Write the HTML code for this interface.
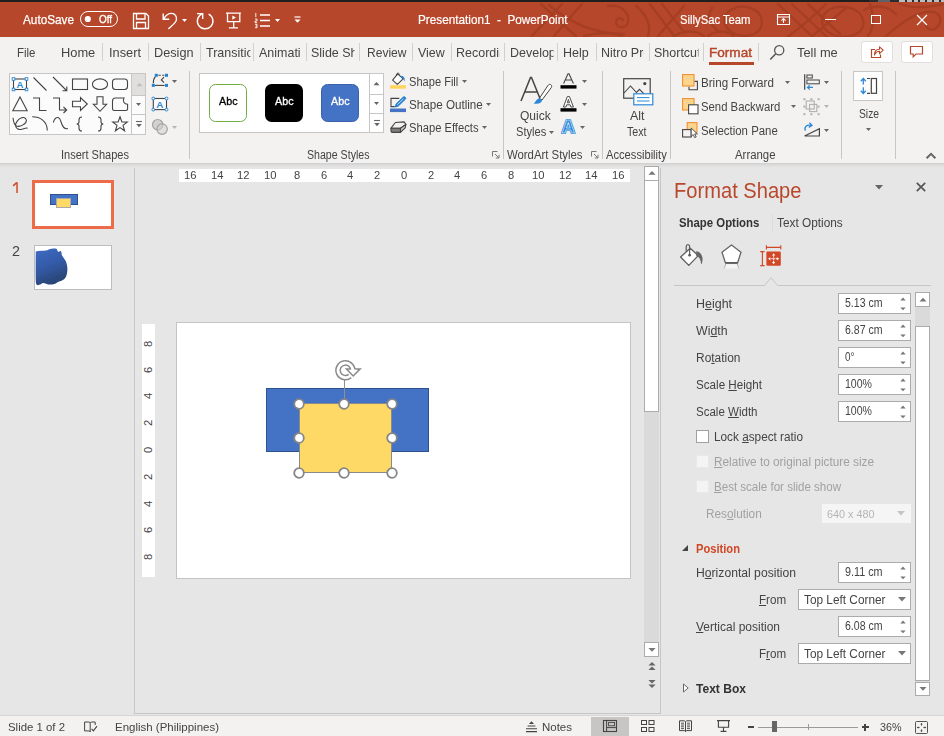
<!DOCTYPE html>
<html><head><meta charset="utf-8"><title>PowerPoint</title>
<style>
html,body{margin:0;padding:0;}
body{width:944px;height:736px;position:relative;overflow:hidden;background:#E6E6E6;font-family:"Liberation Sans",sans-serif;}
.a{position:absolute;display:block;}
.t{position:absolute;display:block;white-space:nowrap;transform-origin:0 50%;}
.t u{text-decoration:underline;text-underline-offset:1px;text-decoration-thickness:1px;}
svg{overflow:visible;}
</style></head><body>
<div class="a" style="left:0px;top:0px;width:944px;height:2px;background:#1f1f1f;"></div>
<div class="a" style="left:0px;top:2px;width:944px;height:35px;background:#B7472A;"></div>
<div class="a" style="left:0px;top:37px;width:944px;height:126px;background:#F3F2F1;"></div>
<div class="a" style="left:0;top:163px;width:944px;height:5px;background:linear-gradient(#cfcfcf,#dedede 50%,#e6e6e6)"></div>
<div class="a" style="left:0px;top:168px;width:944px;height:547px;background:#E6E6E6;"></div>
<div class="a" style="left:0px;top:715px;width:944px;height:1px;background:#d6d6d6;"></div>
<div class="a" style="left:0px;top:716px;width:944px;height:20px;background:#F3F2F1;"></div>
<svg class="a" style="left:524px;top:2px;overflow:hidden;" width="420" height="35" viewBox="0 0 420 35"><g fill="none" stroke="#9c3a21" stroke-width="2.4" opacity="0.62" stroke-linecap="round">
<path d="M8 34 L38 2"/><path d="M30 34 L58 2"/><path d="M17 2 C30 14 40 24 52 34"/>
<path d="M25 3 C45 20 70 32 100 32"/>
<path d="M84 4 C96 2 106 10 104 20 C102 28 92 26 92 20 C92 16 97 15 99 18"/>
<path d="M60 34 C75 30 88 30 98 34"/>
<path d="M112 4 C122 12 128 24 124 34"/><path d="M126 2 L150 34"/><path d="M138 2 L160 30"/><path d="M160 4 L134 34"/>
<path d="M150 34 C160 28 172 28 180 34"/>
<path d="M188 6 C182 14 186 24 196 30"/>
<path d="M200 20 C200 8 214 2 226 6 C240 10 242 26 230 32 C218 37 204 32 200 20"/>
<path d="M184 34 C196 26 204 30 210 34"/>
<path d="M254 2 L290 36"/><path d="M268 2 L304 36"/><path d="M284 2 L316 32"/><path d="M302 2 C290 14 276 26 262 36"/><path d="M322 6 C310 16 298 26 286 36"/>
<path d="M298 20 C298 8 312 2 326 6 C342 10 344 28 330 33 C316 38 300 32 298 20"/>
<path d="M340 8 C350 2 364 4 372 12"/>
<path d="M346 2 C350 14 350 26 344 34"/>
<path d="M362 34 C372 26 384 14 402 10 C414 8 420 16 414 24 C410 30 402 28 402 22"/>
<path d="M376 2 C392 8 408 4 420 2"/>
</g></svg>
<div class="a" style="left:869px;top:0px;width:75px;height:2px;background:#2a2c2f;"></div>
<div class="a" style="left:878px;top:0px;width:12px;height:2px;background:#5c6268;"></div>
<div class="a" style="left:899px;top:0px;width:6px;height:1.6px;background:#bdbdbd;"></div>
<div class="a" style="left:907px;top:0px;width:5px;height:1.6px;background:#bdbdbd;"></div>
<div class="a" style="left:914px;top:0px;width:4px;height:1.6px;background:#bdbdbd;"></div>
<div class="a" style="left:920px;top:0px;width:5px;height:1.6px;background:#bdbdbd;"></div>
<div class="a" style="left:927px;top:0px;width:5px;height:1.6px;background:#bdbdbd;"></div>
<div class="a" style="left:934px;top:0px;width:5px;height:1.6px;background:#bdbdbd;"></div>
<div class="a" style="left:941px;top:0px;width:3px;height:1.6px;background:#bdbdbd;"></div>
<span class="t" style="left:23px;top:11.50px;font-size:13px;line-height:16px;color:#fff;font-weight:400;transform:scaleX(0.9047);-webkit-text-stroke:0.25px #fff;">AutoSave</span>
<div class="a" style="left:80px;top:11px;width:38px;height:16px;border:1px solid #fff;border-radius:8px;box-sizing:border-box;"></div>
<svg class="a" style="left:83px;top:14px;" width="10" height="10" viewBox="0 0 10 10"><circle cx="4.8" cy="5" r="3.1" fill="#fff"/></svg>
<span class="t" style="left:99px;top:11.30px;font-size:11px;line-height:16px;color:#fff;font-weight:400;transform:scaleX(0.8984);-webkit-text-stroke:0.35px #fff;">Off</span>
<svg class="a" style="left:132px;top:12px;" width="18" height="18" viewBox="0 0 18 18"><path d="M1.5 1.5 h12.5 l2.5 2.5 v12.5 h-15 z M4.5 1.5 v5.5 h8.5 v-5.5 M4.5 16.5 v-6 h9 v6" fill="none" stroke="#fff" stroke-width="1.3"/></svg>
<svg class="a" style="left:162px;top:11px;" width="18" height="19" viewBox="0 0 18 19"><path d="M1.2 2.6 V8.3 H7.3 M1.6 8 C4 4 7 2.3 9.6 2.4 C13 2.5 15 5.5 14.4 9 C14 11.5 12 13 6.4 17.9" fill="none" stroke="#fff" stroke-width="1.4"/></svg>
<svg class="a" style="left:181.0px;top:17.5px;" width="7" height="5.0" viewBox="0 0 7 5.0"><path d="M1 1 h5 l-2.5 3.0 z" fill="#fff"/></svg>
<svg class="a" style="left:195px;top:10px;" width="20" height="20" viewBox="0 0 20 20"><path d="M2 3.6 H7.7 V8.9 M13.64 4.02 A7.8 7.8 0 1 1 7.7 3.6" fill="none" stroke="#fff" stroke-width="1.4"/></svg>
<svg class="a" style="left:225px;top:11px;" width="18" height="19" viewBox="0 0 18 19"><path d="M1 2.2 H15.9 M2.5 2.2 V10.7 H14.8 V2.2 M8.7 10.7 V16.4 M3.9 16.8 H13" fill="none" stroke="#fff" stroke-width="1.3"/><path d="M7.3 4.5 L10.9 6.6 L7.3 8.8z" fill="#fff"/></svg>
<svg class="a" style="left:254px;top:12px;" width="17" height="17" viewBox="0 0 17 17"><path d="M6 3 h10 M6 8.5 h10 M6 14 h10" stroke="#fff" stroke-width="1.3"/><path d="M1.8 1 v4 M1 7 h2 v2 h-2 v1.6 h2.2 M1 12.3 h2 v3.4 h-2 M1.6 14 h1.4" fill="none" stroke="#fff" stroke-width="0.9"/></svg>
<svg class="a" style="left:274.0px;top:17.5px;" width="7" height="5.0" viewBox="0 0 7 5.0"><path d="M1 1 h5 l-2.5 3.0 z" fill="#fff"/></svg>
<svg class="a" style="left:292px;top:14px;" width="11" height="11" viewBox="0 0 11 11"><path d="M2.5 3 h6" stroke="#fff" stroke-width="1.2"/><path d="M2.5 5.5 h6 l-3 3.2z" fill="#fff"/></svg>
<span class="t" style="left:417.5px;top:11.50px;font-size:13px;line-height:16px;color:#fff;font-weight:400;transform:scaleX(0.9034);white-space:pre;-webkit-text-stroke:0.2px #fff;">Presentation1  -  PowerPoint</span>
<span class="t" style="left:680px;top:11.50px;font-size:13px;line-height:16px;color:#fff;font-weight:400;transform:scaleX(0.8661);-webkit-text-stroke:0.2px #fff;">SillySac Team</span>
<svg class="a" style="left:776px;top:13px;" width="15" height="13" viewBox="0 0 15 13"><path d="M1.5 1.5 h12 v10 h-12 z M1.5 4 h12" fill="none" stroke="#fff" stroke-width="1.1"/><path d="M7.5 10 v-4.2 M5.5 7.6 l2-2 2 2" fill="none" stroke="#fff" stroke-width="1.1"/></svg>
<div class="a" style="left:825px;top:19px;width:10.5px;height:1.2px;background:#fff;"></div>
<div class="a" style="left:871px;top:14.5px;width:9.5px;height:9.5px;border:1.2px solid #fff;box-sizing:border-box;"></div>
<svg class="a" style="left:916px;top:13.5px;" width="12" height="12" viewBox="0 0 12 12"><path d="M1 1 L11 11 M11 1 L1 11" stroke="#fff" stroke-width="1.2"/></svg>
<span class="t" style="left:17px;top:44.90px;font-size:13.5px;line-height:16px;color:#444;font-weight:400;transform:scaleX(0.8505);">File</span>
<span class="t" style="left:61.25px;top:44.90px;font-size:13.5px;line-height:16px;color:#444;font-weight:400;transform:scaleX(0.9511);">Home</span>
<span class="t" style="left:109px;top:44.90px;font-size:13.5px;line-height:16px;color:#444;font-weight:400;transform:scaleX(0.9478);">Insert</span>
<span class="t" style="left:154.25px;top:44.90px;font-size:13.5px;line-height:16px;color:#444;font-weight:400;transform:scaleX(0.9400);">Design</span>
<span class="t" style="left:205.5px;top:44.90px;font-size:13.5px;line-height:16px;color:#444;font-weight:400;width:48.32px;overflow:hidden;transform:scaleX(0.9250);">Transitions</span>
<span class="t" style="left:258.5px;top:44.90px;font-size:13.5px;line-height:16px;color:#444;font-weight:400;width:45.41px;overflow:hidden;transform:scaleX(0.9250);">Animations</span>
<span class="t" style="left:311px;top:44.90px;font-size:13.5px;line-height:16px;color:#444;font-weight:400;width:46.81px;overflow:hidden;transform:scaleX(0.9250);">Slide Show</span>
<span class="t" style="left:366.5px;top:44.90px;font-size:13.5px;line-height:16px;color:#444;font-weight:400;transform:scaleX(0.8924);">Review</span>
<span class="t" style="left:418px;top:44.90px;font-size:13.5px;line-height:16px;color:#444;font-weight:400;transform:scaleX(0.9219);">View</span>
<span class="t" style="left:456px;top:44.90px;font-size:13.5px;line-height:16px;color:#444;font-weight:400;width:46.70px;overflow:hidden;transform:scaleX(0.9250);">Recording</span>
<span class="t" style="left:509.5px;top:44.90px;font-size:13.5px;line-height:16px;color:#444;font-weight:400;width:46.59px;overflow:hidden;transform:scaleX(0.9250);">Developer</span>
<span class="t" style="left:563.25px;top:44.90px;font-size:13.5px;line-height:16px;color:#444;font-weight:400;transform:scaleX(0.9274);">Help</span>
<span class="t" style="left:601.25px;top:44.90px;font-size:13.5px;line-height:16px;color:#444;font-weight:400;width:46.22px;overflow:hidden;transform:scaleX(0.9250);">Nitro Pro</span>
<span class="t" style="left:654px;top:44.90px;font-size:13.5px;line-height:16px;color:#444;font-weight:400;width:47.57px;overflow:hidden;transform:scaleX(0.9250);">Shortcuts</span>
<div class="a" style="left:102.0px;top:43px;width:1px;height:17.5px;background:#d2d0ce;"></div>
<div class="a" style="left:148.0px;top:43px;width:1px;height:17.5px;background:#d2d0ce;"></div>
<div class="a" style="left:199.75px;top:43px;width:1px;height:17.5px;background:#d2d0ce;"></div>
<div class="a" style="left:253.0px;top:43px;width:1px;height:17.5px;background:#d2d0ce;"></div>
<div class="a" style="left:306.0px;top:43px;width:1px;height:17.5px;background:#d2d0ce;"></div>
<div class="a" style="left:359.0px;top:43px;width:1px;height:17.5px;background:#d2d0ce;"></div>
<div class="a" style="left:412.0px;top:43px;width:1px;height:17.5px;background:#d2d0ce;"></div>
<div class="a" style="left:451.0px;top:43px;width:1px;height:17.5px;background:#d2d0ce;"></div>
<div class="a" style="left:504.0px;top:43px;width:1px;height:17.5px;background:#d2d0ce;"></div>
<div class="a" style="left:557.25px;top:43px;width:1px;height:17.5px;background:#d2d0ce;"></div>
<div class="a" style="left:595.75px;top:43px;width:1px;height:17.5px;background:#d2d0ce;"></div>
<div class="a" style="left:649.0px;top:43px;width:1px;height:17.5px;background:#d2d0ce;"></div>
<div class="a" style="left:703.0px;top:43px;width:1px;height:17.5px;background:#d2d0ce;"></div>
<div class="a" style="left:758.0px;top:43px;width:1px;height:17.5px;background:#d2d0ce;"></div>
<span class="t" style="left:709px;top:44.90px;font-size:13.5px;line-height:16px;color:#B7472A;font-weight:400;transform:scaleX(1.0057);-webkit-text-stroke:0.45px #B7472A;">Format</span>
<div class="a" style="left:709px;top:62px;width:45px;height:3px;background:#B7472A;"></div>
<svg class="a" style="left:769px;top:44px;" width="17" height="17" viewBox="0 0 17 17"><circle cx="10.2" cy="6.3" r="4.6" fill="none" stroke="#555" stroke-width="1.3"/><path d="M7 9.6 L1.2 15.6" stroke="#555" stroke-width="1.5"/></svg>
<span class="t" style="left:796.75px;top:44.90px;font-size:13.5px;line-height:16px;color:#444;font-weight:400;transform:scaleX(0.9530);">Tell me</span>
<div class="a" style="left:861px;top:41px;width:31.5px;height:22px;background:#fff;border:1px solid #e1dfdd;border-radius:3px;box-sizing:border-box;"></div>
<div class="a" style="left:901px;top:41px;width:31.5px;height:22px;background:#fff;border:1px solid #e1dfdd;border-radius:3px;box-sizing:border-box;"></div>
<svg class="a" style="left:869px;top:44px;" width="16" height="16" viewBox="0 0 16 16"><path d="M6 5.5 h-3.5 v8 h9 v-3" fill="none" stroke="#B7472A" stroke-width="1.2"/><path d="M5.5 11 C5.5 7 8 5.2 10.5 5.2 V2.8 L14.2 6.2 L10.5 9.6 V7.3 C8.5 7.3 6.8 8.2 5.5 11z" fill="none" stroke="#B7472A" stroke-width="1.1" stroke-linejoin="round"/></svg>
<svg class="a" style="left:909px;top:45px;" width="16" height="14" viewBox="0 0 16 14"><path d="M1.5 1.5 h12 v7.5 h-6.5 l-2.8 2.8 v-2.8 h-2.7z" fill="none" stroke="#B7472A" stroke-width="1.2"/></svg>
<div class="a" style="left:9px;top:73px;width:137px;height:61.5px;background:#fbfbfb;border:1px solid #c8c6c4;box-sizing:border-box;"></div>
<div class="a" style="left:131px;top:73px;width:1px;height:61.5px;background:#c8c6c4;"></div>
<div class="a" style="left:132px;top:74px;width:13px;height:20.5px;background:#e1dfdd;"></div>
<div class="a" style="left:131px;top:94.5px;width:14.5px;height:1px;background:#c8c6c4;"></div>
<div class="a" style="left:131px;top:113.5px;width:14.5px;height:1px;background:#c8c6c4;"></div>
<svg class="a" style="left:135.5px;top:81.5px;" width="7" height="5" viewBox="0 0 7 5"><path d="M0.5 4.2 L3.5 1 L6.5 4.2z" fill="#bdbdbd"/></svg>
<svg class="a" style="left:135.2px;top:101.8px;" width="7" height="5.0" viewBox="0 0 7 5.0"><path d="M1 1 h5 l-2.5 3.0 z" fill="#666"/></svg>
<svg class="a" style="left:135px;top:119.5px;" width="8" height="9" viewBox="0 0 8 9"><path d="M1 1.5 h6" stroke="#666" stroke-width="1.1"/><path d="M1.2 4 h5.6 l-2.8 3.2z" fill="#666"/></svg>
<svg class="a" style="left:11.0px;top:74.75px;" width="18" height="18" viewBox="0 0 18 18"><rect x="2.5" y="4" width="13" height="10.5" fill="#fff" stroke="#444" stroke-width="1.1"/><text x="9" y="13" font-family="Liberation Sans" font-weight="700" font-size="9.6" fill="#2B88D8" text-anchor="middle">A</text><rect x="1.2" y="2.7" width="2.6" height="2.6" fill="#fff" stroke="#2B88D8" stroke-width="0.9"/><rect x="1.2" y="13.2" width="2.6" height="2.6" fill="#fff" stroke="#2B88D8" stroke-width="0.9"/><rect x="14.2" y="2.7" width="2.6" height="2.6" fill="#fff" stroke="#2B88D8" stroke-width="0.9"/><rect x="14.2" y="13.2" width="2.6" height="2.6" fill="#fff" stroke="#2B88D8" stroke-width="0.9"/></svg>
<svg class="a" style="left:31.0px;top:74.75px;" width="18" height="18" viewBox="0 0 18 18"><path d="M2.5 2.5 L15.5 15.5" fill="none" stroke="#444" stroke-width="1.1"/></svg>
<svg class="a" style="left:51.0px;top:74.75px;" width="18" height="18" viewBox="0 0 18 18"><path d="M2 2 L15.5 15.5 M11.5 15.8 h4.3 v-4.3" fill="none" stroke="#444" stroke-width="1.1"/></svg>
<svg class="a" style="left:71.0px;top:74.75px;" width="18" height="18" viewBox="0 0 18 18"><rect x="1.5" y="4" width="15" height="10.5" fill="none" stroke="#444" stroke-width="1.1"/></svg>
<svg class="a" style="left:91.0px;top:74.75px;" width="18" height="18" viewBox="0 0 18 18"><ellipse cx="9" cy="9.2" rx="7.6" ry="5.3" fill="none" stroke="#444" stroke-width="1.1"/></svg>
<svg class="a" style="left:111.0px;top:74.75px;" width="18" height="18" viewBox="0 0 18 18"><rect x="1.5" y="4" width="15" height="10.5" rx="3" fill="none" stroke="#444" stroke-width="1.1"/></svg>
<svg class="a" style="left:11.0px;top:94.75px;" width="18" height="18" viewBox="0 0 18 18"><path d="M9 2 L16.2 15.8 H1.8z" fill="none" stroke="#444" stroke-width="1.1"/></svg>
<svg class="a" style="left:31.0px;top:94.75px;" width="18" height="18" viewBox="0 0 18 18"><path d="M2 3 h6.5 v12.5 h7" fill="none" stroke="#444" stroke-width="1.1"/></svg>
<svg class="a" style="left:51.0px;top:94.75px;" width="18" height="18" viewBox="0 0 18 18"><path d="M2 3 h6.5 v12 h7 M12.5 12 l3.2 3 -3.2 3" fill="none" stroke="#444" stroke-width="1.1"/></svg>
<svg class="a" style="left:71.0px;top:94.75px;" width="18" height="18" viewBox="0 0 18 18"><path d="M1.5 6.2 h8 v-3.6 l6.8 6.4 -6.8 6.4 v-3.6 h-8z" fill="none" stroke="#444" stroke-width="1.1"/></svg>
<svg class="a" style="left:91.0px;top:94.75px;" width="18" height="18" viewBox="0 0 18 18"><path d="M6 1.8 h6 v7.5 h3.6 l-6.6 7 -6.6-7 h3.6z" fill="none" stroke="#444" stroke-width="1.1"/></svg>
<svg class="a" style="left:111.0px;top:94.75px;" width="18" height="18" viewBox="0 0 18 18"><path d="M4.5 3 h8.5 c-1.6 3 0 6.2 3.6 6.2 v4.6 c0 1-0.7 1.7-1.7 1.7 h-11.7 c-1 0-1.7-0.7-1.7-1.7 v-7.8 c0-1.8 1.2-3 3-3z" fill="none" stroke="#444" stroke-width="1.1"/></svg>
<svg class="a" style="left:11.0px;top:115.25px;" width="18" height="18" viewBox="0 0 18 18"><path d="M2 2.7 C2.5 7 3.5 10 5.5 11 C9 12.5 16 8.5 15.3 5 C14.8 2.5 12.5 2 10.5 2.8 C7 4.2 4 8 4.6 11 C5.2 14 8 15 11 14.2 C13 13.7 15 12.5 16.7 13.2" fill="none" stroke="#444" stroke-width="1.1"/></svg>
<svg class="a" style="left:31.0px;top:115.25px;" width="18" height="18" viewBox="0 0 18 18"><path d="M1.2 1.8 C9 1.8 16.3 6 16.3 15.5" fill="none" stroke="#444" stroke-width="1.1"/></svg>
<svg class="a" style="left:51.0px;top:115.25px;" width="18" height="18" viewBox="0 0 18 18"><path d="M2.3 7.5 C3.5 3.5 5.5 2.3 7 2.5 C9 2.8 9.8 6 10.6 8.5 C11.6 11.5 13.5 14.5 17 13.5" fill="none" stroke="#444" stroke-width="1.1"/></svg>
<svg class="a" style="left:71.0px;top:115.25px;" width="18" height="18" viewBox="0 0 18 18"><path d="M11 2 c-2.5 0-3 1-3 2.8 v2 c0 1.5-0.8 2.2-2.3 2.2 c1.5 0 2.3 0.7 2.3 2.2 v2 c0 1.8 0.5 2.8 3 2.8" fill="none" stroke="#444" stroke-width="1.1" stroke-width="1.3"/></svg>
<svg class="a" style="left:91.0px;top:115.25px;" width="18" height="18" viewBox="0 0 18 18"><path d="M7 2 c2.5 0 3 1 3 2.8 v2 c0 1.5 0.8 2.2 2.3 2.2 c-1.5 0-2.3 0.7-2.3 2.2 v2 c0 1.8-0.5 2.8-3 2.8" fill="none" stroke="#444" stroke-width="1.1" stroke-width="1.3"/></svg>
<svg class="a" style="left:111.0px;top:115.25px;" width="18" height="18" viewBox="0 0 18 18"><path d="M9 1.8 L10.9 7 H16.3 L12 10.4 L13.6 15.8 L9 12.6 L4.4 15.8 L6 10.4 L1.7 7 H7.1z" fill="none" stroke="#444" stroke-width="1.1"/></svg>
<svg class="a" style="left:151px;top:72px;" width="18" height="18" viewBox="0 0 18 18"><path d="M7.4 3.3 h6" fill="none" stroke="#444" stroke-width="1.1" stroke-dasharray="2.4 1.4"/><path d="M4 13.4 h9.6" fill="none" stroke="#444" stroke-width="1.1"/><path d="M2.4 11.4 c-0.3-2.8 0.4-5 2-6.8" fill="none" stroke="#444" stroke-width="1.1"/><path d="M13 5.2 L10.4 7.9 L13 10.6" fill="none" stroke="#444" stroke-width="1.2"/><rect x="3.8" y="1.7999999999999998" width="3" height="3" fill="#1e83d6"/><rect x="14.0" y="1.7999999999999998" width="3" height="3" fill="#1e83d6"/><rect x="0.7999999999999998" y="11.9" width="3" height="3" fill="#1e83d6"/><rect x="14.0" y="11.9" width="3" height="3" fill="#1e83d6"/></svg>
<svg class="a" style="left:171.0px;top:78.5px;" width="7" height="5.0" viewBox="0 0 7 5.0"><path d="M1 1 h5 l-2.5 3.0 z" fill="#666"/></svg>
<svg class="a" style="left:151px;top:95px;" width="18" height="18" viewBox="0 0 18 18"><rect x="2.3" y="3.5" width="13.2" height="11.1" fill="#fbfbfb" stroke="#444" stroke-width="1.1"/><text x="8.9" y="12.7" font-family="Liberation Sans" font-weight="700" font-size="9.8" fill="#2B88D8" text-anchor="middle">A</text><circle cx="2.3" cy="3.5" r="1.4" fill="#fff" stroke="#1e83d6" stroke-width="1"/><circle cx="2.3" cy="14.6" r="1.4" fill="#fff" stroke="#1e83d6" stroke-width="1"/><circle cx="15.5" cy="3.5" r="1.4" fill="#fff" stroke="#1e83d6" stroke-width="1"/><circle cx="15.5" cy="14.6" r="1.4" fill="#fff" stroke="#1e83d6" stroke-width="1"/></svg>
<svg class="a" style="left:151px;top:118px;" width="18" height="18" viewBox="0 0 18 18"><circle cx="6.7" cy="6.7" r="5.2" fill="#d2d2d2" stroke="#a3a3a3" stroke-width="1.2"/><circle cx="11.1" cy="11.1" r="5.2" fill="#d2d2d2" fill-opacity="0.55" stroke="#a3a3a3" stroke-width="1.2"/></svg>
<svg class="a" style="left:171.0px;top:125.3px;" width="7" height="5.0" viewBox="0 0 7 5.0"><path d="M1 1 h5 l-2.5 3.0 z" fill="#b5b5b5"/></svg>
<span class="t" style="left:60.5px;top:147.00px;font-size:12px;line-height:16px;color:#444;font-weight:400;transform:scaleX(0.9184);">Insert Shapes</span>
<div class="a" style="left:189px;top:71px;width:1px;height:88px;background:#c8c6c4;"></div>
<div class="a" style="left:199px;top:73px;width:185px;height:60px;background:#fff;border:1px solid #c8c6c4;box-sizing:border-box;"></div>
<div class="a" style="left:369px;top:73px;width:1px;height:60px;background:#c8c6c4;"></div>
<div class="a" style="left:369px;top:93.7px;width:14.5px;height:1px;background:#c8c6c4;"></div>
<div class="a" style="left:369px;top:113px;width:14.5px;height:1px;background:#c8c6c4;"></div>
<svg class="a" style="left:373.2px;top:101.3px;" width="7" height="5.0" viewBox="0 0 7 5.0"><path d="M1 1 h5 l-2.5 3.0 z" fill="#666"/></svg>
<svg class="a" style="left:373.2px;top:81px;" width="7" height="5" viewBox="0 0 7 5"><path d="M0.5 4.2 L3.5 1 L6.5 4.2z" fill="#666"/></svg>
<svg class="a" style="left:373px;top:119px;" width="8" height="9" viewBox="0 0 8 9"><path d="M1 1.5 h6" stroke="#666" stroke-width="1.1"/><path d="M1.2 4 h5.6 l-2.8 3.2z" fill="#666"/></svg>
<div class="a" style="left:209px;top:83.8px;width:38px;height:38px;background:#fff;border:1.5px solid #70AD47;border-radius:6.5px;box-sizing:border-box;"></div>
<div class="a" style="left:265px;top:83.8px;width:38px;height:38px;background:#000;border-radius:6.5px;"></div>
<div class="a" style="left:321px;top:83.8px;width:38px;height:38px;background:#4472C4;border:1px solid #3a62ab;border-radius:6.5px;box-sizing:border-box;"></div>
<span class="t" style="left:219px;top:93.20px;font-size:11px;line-height:16px;color:#000;font-weight:400;transform:scaleX(0.9760);-webkit-text-stroke:0.3px #000;">Abc</span>
<span class="t" style="left:275px;top:93.20px;font-size:11px;line-height:16px;color:#fff;font-weight:400;transform:scaleX(0.9760);-webkit-text-stroke:0.3px #fff;">Abc</span>
<span class="t" style="left:331px;top:93.20px;font-size:11px;line-height:16px;color:#fff;font-weight:400;transform:scaleX(0.9760);-webkit-text-stroke:0.3px #fff;">Abc</span>
<svg class="a" style="left:390px;top:71px;" width="18" height="18" viewBox="0 0 18 18"><path d="M2.6 9.1 L7.7 2.9 L13.1 7.8 L7.3 13.3z" fill="#fff" stroke="#444" stroke-width="1.1" stroke-linejoin="round"/><path d="M6.6 5 C5.8 2.2 8.6 0.8 9.6 3.6" fill="none" stroke="#444" stroke-width="1"/><path d="M11.4 4.4 c2.8 0.8 4 3.4 3 6.4 c-0.4-2.2-1.4-3.4-3.2-4.2z" fill="#1e83d6"/><rect x="0" y="14.2" width="16" height="3.5" fill="#FFD55F"/></svg>
<svg class="a" style="left:390px;top:94.5px;" width="18" height="18" viewBox="0 0 18 18"><path d="M9.3 3.4 H1 V11.6 H4.8" fill="none" stroke="#444" stroke-width="1.1"/><path d="M5.2 12 l0.9-3 7.2-7 c1-1 3.2 1 2.2 2.1 l-7.2 7z" fill="#2B88D8" stroke="#1e74c4" stroke-width="0.9" stroke-linejoin="round"/><path d="M7.4 9.6 L13.4 3.8" stroke="#bfe0fa" stroke-width="0.9"/><rect x="0" y="13.5" width="16" height="3.6" fill="#4472C4"/></svg>
<svg class="a" style="left:390px;top:118.5px;" width="18" height="18" viewBox="0 0 18 18"><path d="M1 9.2 L5.4 3.5 L14.1 2.9 L15.9 5.4 L10.5 9.2z" fill="#f2f2f2" stroke="#444" stroke-width="1.1" stroke-linejoin="round"/><path d="M1 9.2 H10.5 V13.4 H2.3 C1.4 13.4 1 12.8 1 12z" fill="#7d7d7d" stroke="#444" stroke-width="1.1" stroke-linejoin="round"/><path d="M10.5 9.2 L15.9 5.4 L15.2 8.8 L10.5 13.4z" fill="#c4c4c4" stroke="#444" stroke-width="1.1" stroke-linejoin="round"/></svg>
<span class="t" style="left:409.2px;top:73.50px;font-size:12px;line-height:16px;color:#444;font-weight:400;transform:scaleX(0.9239);">Shape Fill</span>
<svg class="a" style="left:460.8px;top:79.0px;" width="7" height="5.0" viewBox="0 0 7 5.0"><path d="M1 1 h5 l-2.5 3.0 z" fill="#666"/></svg>
<span class="t" style="left:409.2px;top:96.70px;font-size:12px;line-height:16px;color:#444;font-weight:400;transform:scaleX(0.9704);">Shape Outline</span>
<svg class="a" style="left:485.1px;top:102.2px;" width="7" height="5.0" viewBox="0 0 7 5.0"><path d="M1 1 h5 l-2.5 3.0 z" fill="#666"/></svg>
<span class="t" style="left:409.2px;top:119.70px;font-size:12px;line-height:16px;color:#444;font-weight:400;transform:scaleX(0.9329);">Shape Effects</span>
<svg class="a" style="left:480.7px;top:125.2px;" width="7" height="5.0" viewBox="0 0 7 5.0"><path d="M1 1 h5 l-2.5 3.0 z" fill="#666"/></svg>
<svg class="a" style="left:491.5px;top:151px;" width="8" height="8" viewBox="0 0 8 8"><path d="M0.5 5.5 v-5 h5" fill="none" stroke="#777" stroke-width="1"/><path d="M3 3 l3.8 3.8 M7 3.8 v3.2 h-3.2" fill="none" stroke="#777" stroke-width="1"/></svg>
<span class="t" style="left:306.75px;top:147.00px;font-size:12px;line-height:16px;color:#444;font-weight:400;transform:scaleX(0.8839);">Shape Styles</span>
<div class="a" style="left:503px;top:71px;width:1px;height:88px;background:#c8c6c4;"></div>
<svg class="a" style="left:519px;top:75px;" width="36" height="32" viewBox="0 0 36 32"><path d="M2 26 L11.5 2.5 h1 L22 26 M5.8 17 h12.6" fill="none" stroke="#444" stroke-width="1.5"/><path d="M31.5 9.5 c1.2 0.6 1.6 1.8 0.8 3 L23 25 l-2.6-1.6 L29 10.4 c0.7-1 1.6-1.3 2.5-0.9z" fill="#fff" stroke="#444" stroke-width="1"/><path d="M20.2 23.2 l3 1.9 c-0.5 3-3.5 4.4-8.7 3.4 c2.2-1 2.6-4.6 5.7-5.3z" fill="#2B88D8"/></svg>
<span class="t" style="left:520.25px;top:108.30px;font-size:12.5px;line-height:16px;color:#444;font-weight:400;transform:scaleX(0.9624);">Quick</span>
<span class="t" style="left:516px;top:123.80px;font-size:12.5px;line-height:16px;color:#444;font-weight:400;transform:scaleX(0.8887);">Styles</span>
<svg class="a" style="left:548.0px;top:130.0px;" width="7" height="5.0" viewBox="0 0 7 5.0"><path d="M1 1 h5 l-2.5 3.0 z" fill="#666"/></svg>
<svg class="a" style="left:559.5px;top:73.3px;" width="17" height="16" viewBox="0 0 17 16"><path d="M3.6 10.4 L8 0.8 h1 L13.4 10.4 M5.2 7 h6.6" fill="none" stroke="#444" stroke-width="1.1"/><rect x="0.5" y="12.2" width="16" height="3.4" fill="#000"/></svg>
<svg class="a" style="left:581.0px;top:78.8px;" width="7" height="5.0" viewBox="0 0 7 5.0"><path d="M1 1 h5 l-2.5 3.0 z" fill="#666"/></svg>
<svg class="a" style="left:559.5px;top:96px;" width="17" height="16" viewBox="0 0 17 16"><g transform="translate(3.4,0.2)"><path d="M0 10.8 L3.9 0.4 H6.1 L10 10.8 H7.5 L6.8 8.6 H3.2 L2.5 10.8 Z M3.9 6.6 H6.1 L5 3.2 Z" fill="#fff" stroke="#444" stroke-width="0.95" fill-rule="evenodd" stroke-linejoin="round"/></g><rect x="0.5" y="12.2" width="16" height="3.4" fill="#000"/></svg>
<svg class="a" style="left:581.0px;top:101.8px;" width="7" height="5.0" viewBox="0 0 7 5.0"><path d="M1 1 h5 l-2.5 3.0 z" fill="#666"/></svg>
<svg class="a" style="left:558.5px;top:117px;" width="19" height="19" viewBox="0 0 19 19"><text x="9.3" y="16.2" font-family="Liberation Sans" font-weight="700" font-size="18.5" fill="#1e83d6" stroke="#1e83d6" stroke-width="2.2" stroke-linejoin="round" text-anchor="middle">A</text><text x="9.3" y="16.2" font-family="Liberation Sans" font-weight="700" font-size="18.5" fill="#2B88D8" stroke="#fff" stroke-width="0.55" text-anchor="middle">A</text></svg>
<svg class="a" style="left:578.8px;top:125.2px;" width="7" height="5.0" viewBox="0 0 7 5.0"><path d="M1 1 h5 l-2.5 3.0 z" fill="#666"/></svg>
<span class="t" style="left:507px;top:147.00px;font-size:12px;line-height:16px;color:#444;font-weight:400;transform:scaleX(0.9461);">WordArt Styles</span>
<svg class="a" style="left:591px;top:151px;" width="8" height="8" viewBox="0 0 8 8"><path d="M0.5 5.5 v-5 h5" fill="none" stroke="#777" stroke-width="1"/><path d="M3 3 l3.8 3.8 M7 3.8 v3.2 h-3.2" fill="none" stroke="#777" stroke-width="1"/></svg>
<div class="a" style="left:602px;top:71px;width:1px;height:88px;background:#c8c6c4;"></div>
<svg class="a" style="left:622px;top:77px;" width="33" height="30" viewBox="0 0 33 30"><rect x="1.7" y="1.7" width="26.5" height="19.5" fill="none" stroke="#444" stroke-width="1.2"/><path d="M2 16 l6.5-7 6 6.5 3-3.2 5 5" fill="none" stroke="#444" stroke-width="1.1"/><circle cx="22.8" cy="6.6" r="1.6" fill="#444"/><rect x="11.8" y="16.8" width="19" height="11" fill="#fff" stroke="#2B88D8" stroke-width="1.2"/><path d="M15 20.6 h12.5 M15 24 h12.5" stroke="#2B88D8" stroke-width="1"/></svg>
<span class="t" style="left:629.5px;top:108.30px;font-size:12.5px;line-height:16px;color:#444;font-weight:400;transform:scaleX(0.9940);">Alt</span>
<span class="t" style="left:627px;top:123.80px;font-size:12.5px;line-height:16px;color:#444;font-weight:400;transform:scaleX(0.8506);">Text</span>
<span class="t" style="left:606.25px;top:147.00px;font-size:12px;line-height:16px;color:#444;font-weight:400;transform:scaleX(0.9296);">Accessibility</span>
<div class="a" style="left:670.3px;top:71px;width:1px;height:88px;background:#c8c6c4;"></div>
<svg class="a" style="left:681px;top:73px;" width="19" height="19" viewBox="0 0 19 19"><path d="M8 13.6 v3.2 h8.4 v-8.4 h-3.2" fill="none" stroke="#444" stroke-width="1.1"/><rect x="1.6" y="1.6" width="11.4" height="11.4" fill="#FBD48D" stroke="#F0922E" stroke-width="1.1"/></svg>
<svg class="a" style="left:681px;top:97px;" width="19" height="19" viewBox="0 0 19 19"><rect x="1.6" y="1.6" width="11.4" height="11.4" fill="#FBD48D" stroke="#F0922E" stroke-width="1.1"/><rect x="7.6" y="7.8" width="9.4" height="9" fill="#fff" stroke="#444" stroke-width="1.1"/></svg>
<svg class="a" style="left:681px;top:120px;" width="19" height="19" viewBox="0 0 19 19"><rect x="6.2" y="2.6" width="9.8" height="9.8" fill="#FBD48D" stroke="#F0922E" stroke-width="1.1"/><rect x="1.6" y="9.6" width="8.6" height="7.4" fill="#f3f2f1" stroke="#444" stroke-width="1.1"/><path d="M10.2 8 v8.4 l2-1.9 1.5 3.1 1.5-0.7 -1.5-3 h2.7z" fill="#fff" stroke="#444" stroke-width="0.9" stroke-linejoin="round"/></svg>
<span class="t" style="left:701.4px;top:74.50px;font-size:12px;line-height:16px;color:#444;font-weight:400;transform:scaleX(0.9674);">Bring Forward</span>
<svg class="a" style="left:784.1px;top:80.0px;" width="7" height="5.0" viewBox="0 0 7 5.0"><path d="M1 1 h5 l-2.5 3.0 z" fill="#666"/></svg>
<span class="t" style="left:701.4px;top:98.70px;font-size:12px;line-height:16px;color:#444;font-weight:400;transform:scaleX(0.9435);">Send Backward</span>
<svg class="a" style="left:789.9px;top:104.2px;" width="7" height="5.0" viewBox="0 0 7 5.0"><path d="M1 1 h5 l-2.5 3.0 z" fill="#666"/></svg>
<span class="t" style="left:701.4px;top:122.80px;font-size:12px;line-height:16px;color:#444;font-weight:400;transform:scaleX(0.9514);">Selection Pane</span>
<svg class="a" style="left:802px;top:73px;" width="19" height="19" viewBox="0 0 19 19"><path d="M2.7 1.2 v15.6" stroke="#444" stroke-width="1.2"/><rect x="4.9" y="2" width="5.4" height="3" fill="none" stroke="#444" stroke-width="1"/><rect x="4.9" y="7" width="12.4" height="3.8" fill="none" stroke="#444" stroke-width="1"/><path d="M11 14.4 h-5.4 M7.8 12.2 l-2.3 2.2 2.3 2.2" fill="none" stroke="#2B88D8" stroke-width="1.2"/></svg>
<svg class="a" style="left:823.3px;top:79.8px;" width="7" height="5.0" viewBox="0 0 7 5.0"><path d="M1 1 h5 l-2.5 3.0 z" fill="#666"/></svg>
<svg class="a" style="left:802px;top:97px;" width="19" height="19" viewBox="0 0 19 19"><rect x="4.2" y="4" width="8" height="8" fill="none" stroke="#b0b0b0" stroke-width="1.1"/><rect x="7.6" y="7.4" width="7.2" height="7.2" fill="none" stroke="#b0b0b0" stroke-width="1.1"/><rect x="1.4" y="1.2" width="2" height="2" fill="#b0b0b0"/><rect x="1.4" y="16.2" width="2" height="2" fill="#b0b0b0"/><rect x="8.4" y="1.2" width="2" height="2" fill="#b0b0b0"/><rect x="8.4" y="16.2" width="2" height="2" fill="#b0b0b0"/><rect x="15.6" y="1.2" width="2" height="2" fill="#b0b0b0"/><rect x="15.6" y="16.2" width="2" height="2" fill="#b0b0b0"/><rect x="1.4" y="8.6" width="2" height="2" fill="#b0b0b0"/><rect x="15.6" y="8.6" width="2" height="2" fill="#b0b0b0"/></svg>
<svg class="a" style="left:823.3px;top:104.0px;" width="7" height="5.0" viewBox="0 0 7 5.0"><path d="M1 1 h5 l-2.5 3.0 z" fill="#b5b5b5"/></svg>
<svg class="a" style="left:802px;top:119.6px;" width="19" height="19" viewBox="0 0 19 19"><path d="M2.6 16 L17.4 8.8 V16z" fill="none" stroke="#444" stroke-width="1.2"/><path d="M3.4 10.6 c-1.6-3.2 1.4-6.6 6-5.2 M7.4 2.6 l2.6 2.8 -3.2 2" fill="none" stroke="#2B88D8" stroke-width="1.3"/></svg>
<svg class="a" style="left:823.3px;top:127.5px;" width="7" height="5.0" viewBox="0 0 7 5.0"><path d="M1 1 h5 l-2.5 3.0 z" fill="#666"/></svg>
<span class="t" style="left:735px;top:147.00px;font-size:12px;line-height:16px;color:#444;font-weight:400;transform:scaleX(0.9487);">Arrange</span>
<div class="a" style="left:841px;top:71px;width:1px;height:88px;background:#c8c6c4;"></div>
<div class="a" style="left:853px;top:71px;width:29.5px;height:29.5px;background:#fdfdfd;border:1px solid #c8c6c4;box-sizing:border-box;"></div>
<svg class="a" style="left:857px;top:76px;" width="22" height="20" viewBox="0 0 22 20"><path d="M6.3 2.6 v6 M3.8 5.2 l2.5-2.7 2.5 2.7 M6.3 11.3 v6 M3.8 14.8 l2.5 2.7 2.5-2.7" fill="none" stroke="#2B88D8" stroke-width="1.3"/><rect x="14.3" y="2.5" width="5.2" height="14.8" fill="none" stroke="#444" stroke-width="1.2"/><path d="M10 2.5 h3 M10 17.3 h3" stroke="#444" stroke-width="1.2"/></svg>
<span class="t" style="left:859.25px;top:105.80px;font-size:12.5px;line-height:16px;color:#444;font-weight:400;transform:scaleX(0.8225);">Size</span>
<svg class="a" style="left:865.0px;top:126.9px;" width="7" height="5.0" viewBox="0 0 7 5.0"><path d="M1 1 h5 l-2.5 3.0 z" fill="#666"/></svg>
<div class="a" style="left:895px;top:71px;width:1px;height:88px;background:#c8c6c4;"></div>
<svg class="a" style="left:925px;top:150.5px;" width="12" height="9" viewBox="0 0 12 9"><path d="M1.6 7.2 L6 2.8 L10.4 7.2" fill="none" stroke="#666" stroke-width="2"/></svg>
<svg class="a" style="left:12px;top:181px;" width="8" height="14" viewBox="0 0 8 14"><path d="M1.1 4.9 L4.7 1.6 M5.05 1.2 V12.1" fill="none" stroke="#D24726" stroke-width="1.45"/></svg>
<div class="a" style="left:32px;top:180px;width:82px;height:49px;background:#fff;border:3px solid #EE6B4A;box-sizing:border-box;"></div>
<div class="a" style="left:50.2px;top:193.9px;width:27.8px;height:11px;background:#4472C4;border:0.6px solid #2f528f;box-sizing:border-box;"></div>
<div class="a" style="left:55.7px;top:197.7px;width:15.3px;height:10.6px;background:#FFD966;border:0.6px solid #a9a9a9;box-sizing:border-box;"></div>
<span class="t" style="left:12px;top:242.00px;font-size:15.5px;line-height:18px;color:#444;font-weight:400;transform:scaleX(0.9280);">2</span>
<div class="a" style="left:34px;top:245px;width:78px;height:44.5px;background:#fff;border:1px solid #bdbdbd;box-sizing:border-box;"></div>
<svg class="a" style="left:35.3px;top:246.4px;" width="40" height="42" viewBox="0 0 40 42"><defs><linearGradient id="bg1" x1="0" y1="0" x2="0.35" y2="1"><stop offset="0" stop-color="#3d6cc4"/><stop offset="0.55" stop-color="#335aa6"/><stop offset="1" stop-color="#2a4577"/></linearGradient><filter id="bl"><feGaussianBlur stdDeviation="0.45"/></filter></defs>
<path filter="url(#bl)" d="M0.8 5.5 C4 4.6 8 5 10.8 4.6 C13 4.2 14.5 2.9 16.5 2.7 C18.5 2.4 20 2.3 21.3 2.7 C22.6 3.2 22.4 5.6 23.2 5.8 C24.2 6 25.2 4.6 25.9 5.2 C26.8 6 26.4 8.4 27.2 9.8 C28.4 12 30.4 13.8 31.3 16.5 C32.3 19.4 32.6 22.4 32.3 25.1 C32 27.8 31.6 30 30.4 31.7 C28.8 34 26.4 34.6 24.2 35.5 C22.4 36.2 21.2 37.4 19.4 37.9 C17.4 38.5 15.2 38.7 13.2 38.4 C11.2 38.1 9.6 36.9 8 37 C6.8 37.1 6.2 38.3 5.1 38.6 C4.2 38.9 3 39.4 2.2 39 C1 38.4 0.9 37 0.8 35.5 C0.6 26 0.6 14 0.8 5.5z" fill="url(#bg1)"/></svg>
<div class="a" style="left:134px;top:168px;width:1px;height:546px;background:#c6c6c6;"></div>
<div class="a" style="left:179px;top:169px;width:451px;height:13px;background:#fff;"></div>
<span class="t" style="left:183.75px;top:167.60px;font-size:11.5px;line-height:14px;color:#444;font-weight:400;transform:scaleX(0.9772);">16</span>
<span class="t" style="left:210.75px;top:167.60px;font-size:11.5px;line-height:14px;color:#444;font-weight:400;transform:scaleX(0.9772);">14</span>
<span class="t" style="left:237.25px;top:167.60px;font-size:11.5px;line-height:14px;color:#444;font-weight:400;transform:scaleX(0.9772);">12</span>
<span class="t" style="left:264.25px;top:167.60px;font-size:11.5px;line-height:14px;color:#444;font-weight:400;transform:scaleX(0.9772);">10</span>
<span class="t" style="left:293.9px;top:167.60px;font-size:11.5px;line-height:14px;color:#444;font-weight:400;transform:scaleX(0.9694);">8</span>
<span class="t" style="left:320.9px;top:167.60px;font-size:11.5px;line-height:14px;color:#444;font-weight:400;transform:scaleX(0.9694);">6</span>
<span class="t" style="left:347.4px;top:167.60px;font-size:11.5px;line-height:14px;color:#444;font-weight:400;transform:scaleX(0.9694);">4</span>
<span class="t" style="left:374.4px;top:167.60px;font-size:11.5px;line-height:14px;color:#444;font-weight:400;transform:scaleX(0.9694);">2</span>
<span class="t" style="left:400.9px;top:167.60px;font-size:11.5px;line-height:14px;color:#444;font-weight:400;transform:scaleX(0.9694);">0</span>
<span class="t" style="left:427.9px;top:167.60px;font-size:11.5px;line-height:14px;color:#444;font-weight:400;transform:scaleX(0.9694);">2</span>
<span class="t" style="left:454.4px;top:167.60px;font-size:11.5px;line-height:14px;color:#444;font-weight:400;transform:scaleX(0.9694);">4</span>
<span class="t" style="left:481.4px;top:167.60px;font-size:11.5px;line-height:14px;color:#444;font-weight:400;transform:scaleX(0.9694);">6</span>
<span class="t" style="left:507.9px;top:167.60px;font-size:11.5px;line-height:14px;color:#444;font-weight:400;transform:scaleX(0.9694);">8</span>
<span class="t" style="left:531.75px;top:167.60px;font-size:11.5px;line-height:14px;color:#444;font-weight:400;transform:scaleX(0.9772);">10</span>
<span class="t" style="left:558.75px;top:167.60px;font-size:11.5px;line-height:14px;color:#444;font-weight:400;transform:scaleX(0.9772);">12</span>
<span class="t" style="left:585.25px;top:167.60px;font-size:11.5px;line-height:14px;color:#444;font-weight:400;transform:scaleX(0.9772);">14</span>
<span class="t" style="left:612.25px;top:167.60px;font-size:11.5px;line-height:14px;color:#444;font-weight:400;transform:scaleX(0.9772);">16</span>
<div class="a" style="left:142px;top:324px;width:13px;height:253px;background:#fff;"></div>
<span class="t" style="left:144.9px;top:336.5px;font-size:11.5px;line-height:14px;color:#444;width:6.2px;transform-origin:50% 50%;transform:rotate(-90deg) scaleX(0.97);">8</span>
<span class="t" style="left:144.9px;top:362.5px;font-size:11.5px;line-height:14px;color:#444;width:6.2px;transform-origin:50% 50%;transform:rotate(-90deg) scaleX(0.97);">6</span>
<span class="t" style="left:144.9px;top:389.0px;font-size:11.5px;line-height:14px;color:#444;width:6.2px;transform-origin:50% 50%;transform:rotate(-90deg) scaleX(0.97);">4</span>
<span class="t" style="left:144.9px;top:416.0px;font-size:11.5px;line-height:14px;color:#444;width:6.2px;transform-origin:50% 50%;transform:rotate(-90deg) scaleX(0.97);">2</span>
<span class="t" style="left:144.9px;top:443.0px;font-size:11.5px;line-height:14px;color:#444;width:6.2px;transform-origin:50% 50%;transform:rotate(-90deg) scaleX(0.97);">0</span>
<span class="t" style="left:144.9px;top:469.5px;font-size:11.5px;line-height:14px;color:#444;width:6.2px;transform-origin:50% 50%;transform:rotate(-90deg) scaleX(0.97);">2</span>
<span class="t" style="left:144.9px;top:496.5px;font-size:11.5px;line-height:14px;color:#444;width:6.2px;transform-origin:50% 50%;transform:rotate(-90deg) scaleX(0.97);">4</span>
<span class="t" style="left:144.9px;top:523.0px;font-size:11.5px;line-height:14px;color:#444;width:6.2px;transform-origin:50% 50%;transform:rotate(-90deg) scaleX(0.97);">6</span>
<span class="t" style="left:144.9px;top:550.0px;font-size:11.5px;line-height:14px;color:#444;width:6.2px;transform-origin:50% 50%;transform:rotate(-90deg) scaleX(0.97);">8</span>
<div class="a" style="left:176px;top:322px;width:455px;height:257px;background:#fff;border:1px solid #c4c4c4;box-sizing:border-box;"></div>
<div class="a" style="left:266.2px;top:388px;width:162.6px;height:63.9px;background:#4472C4;border:1px solid #2f528f;box-sizing:border-box;"></div>
<div class="a" style="left:298.5px;top:403.3px;width:93.2px;height:70px;background:#FFD966;border:1px solid #8a8a8a;box-sizing:border-box;"></div>
<div class="a" style="left:344px;top:380px;width:1px;height:19px;background:#8f8f8f;"></div>
<svg class="a" style="left:291.5px;top:396.6px;" width="14" height="14" viewBox="0 0 14 14"><circle cx="7" cy="7" r="4.8" fill="#fff" stroke="#868686" stroke-width="1.8"/></svg>
<svg class="a" style="left:291.5px;top:431.4px;" width="14" height="14" viewBox="0 0 14 14"><circle cx="7" cy="7" r="4.8" fill="#fff" stroke="#868686" stroke-width="1.8"/></svg>
<svg class="a" style="left:291.5px;top:466.4px;" width="14" height="14" viewBox="0 0 14 14"><circle cx="7" cy="7" r="4.8" fill="#fff" stroke="#868686" stroke-width="1.8"/></svg>
<svg class="a" style="left:337.4px;top:396.6px;" width="14" height="14" viewBox="0 0 14 14"><circle cx="7" cy="7" r="4.8" fill="#fff" stroke="#868686" stroke-width="1.8"/></svg>
<svg class="a" style="left:337.4px;top:466.4px;" width="14" height="14" viewBox="0 0 14 14"><circle cx="7" cy="7" r="4.8" fill="#fff" stroke="#868686" stroke-width="1.8"/></svg>
<svg class="a" style="left:384.6px;top:396.6px;" width="14" height="14" viewBox="0 0 14 14"><circle cx="7" cy="7" r="4.8" fill="#fff" stroke="#868686" stroke-width="1.8"/></svg>
<svg class="a" style="left:384.6px;top:431.4px;" width="14" height="14" viewBox="0 0 14 14"><circle cx="7" cy="7" r="4.8" fill="#fff" stroke="#868686" stroke-width="1.8"/></svg>
<svg class="a" style="left:384.6px;top:466.4px;" width="14" height="14" viewBox="0 0 14 14"><circle cx="7" cy="7" r="4.8" fill="#fff" stroke="#868686" stroke-width="1.8"/></svg>
<svg class="a" style="left:333px;top:358px;" width="28" height="26" viewBox="0 0 28 26"><path d="M19.75 12.30 A7.35 7.35 0 1 0 16.93 18.09" fill="none" stroke="#8a8a8a" stroke-width="5.8"/>
<path d="M13.4 10.9 L27.2 10.9 L20.2 18z" fill="#fff" stroke="#8a8a8a" stroke-width="1.5" stroke-linejoin="miter"/>
<path d="M19.59 13.83 A7.35 7.35 0 1 0 17.32 17.76" fill="none" stroke="#fff" stroke-width="2.8"/>
<path d="M17.6 11.5 L22.6 11.5 L20.2 15z" fill="#fff"/></svg>
<div class="a" style="left:644px;top:166px;width:15px;height:491px;background:#dadada;"></div>
<div class="a" style="left:644px;top:166px;width:15px;height:15px;background:#fff;border:1px solid #ababab;box-sizing:border-box;"></div>
<svg class="a" style="left:647.5px;top:170.4px;" width="8" height="6" viewBox="0 0 8 6"><path d="M0.4 4.8 L4 1 L7.6 4.8z" fill="#777"/></svg>
<div class="a" style="left:644px;top:180px;width:15px;height:232px;background:#fff;border:1px solid #ababab;box-sizing:border-box;"></div>
<div class="a" style="left:644px;top:642px;width:15px;height:15px;background:#fff;border:1px solid #ababab;box-sizing:border-box;"></div>
<svg class="a" style="left:647.5px;top:646.6px;" width="8" height="6" viewBox="0 0 8 6"><path d="M0.4 1 L4 4.8 L7.6 1z" fill="#777"/></svg>
<svg class="a" style="left:646.5px;top:661px;" width="10" height="10" viewBox="0 0 10 10"><path d="M1.4 4.6 L5 1 L8.6 4.6z M1.4 9 L5 5.4 L8.6 9z" fill="#666"/></svg>
<svg class="a" style="left:646.5px;top:678.5px;" width="10" height="10" viewBox="0 0 10 10"><path d="M1.4 1 L5 4.6 L8.6 1z M1.4 5.4 L5 9 L8.6 5.4z" fill="#666"/></svg>
<div class="a" style="left:660px;top:168px;width:1px;height:546px;background:#c6c6c6;"></div>
<div class="a" style="left:135px;top:713px;width:525px;height:1px;background:#c6c6c6;"></div>
<span class="t" style="left:674px;top:177.60px;font-size:21.5px;line-height:26px;color:#B9472B;font-weight:400;transform:scaleX(0.9359);">Format Shape</span>
<svg class="a" style="left:874.0px;top:183.75px;" width="10" height="6.5" viewBox="0 0 10 6.5"><path d="M1 1 h8 l-4.0 4.5 z" fill="#666"/></svg>
<svg class="a" style="left:914.5px;top:181px;" width="12" height="12" viewBox="0 0 12 12"><path d="M1.8 1.8 L10.2 10.2 M10.2 1.8 L1.8 10.2" stroke="#555" stroke-width="1.7"/></svg>
<span class="t" style="left:679px;top:215.00px;font-size:12px;line-height:16px;color:#333;font-weight:700;transform:scaleX(0.9483);">Shape Options</span>
<div class="a" style="left:771.5px;top:214px;width:1px;height:17px;background:#dcdcdc;"></div>
<span class="t" style="left:777.3px;top:215.00px;font-size:12px;line-height:16px;color:#444;font-weight:400;transform:scaleX(0.9850);">Text Options</span>
<svg class="a" style="left:679px;top:243px;" width="25" height="26" viewBox="0 0 25 26"><path d="M1.6 14 L11.2 5.2 L19.2 12.6 L9.8 22.4z" fill="#fff" stroke="#5e5e5e" stroke-width="1.3" stroke-linejoin="round"/><path d="M10.6 12 V3.6 C10.6 1 7.2 1 7.2 3.6 V8.6" fill="none" stroke="#5e5e5e" stroke-width="1.2"/><circle cx="10.6" cy="12.2" r="1.4" fill="#5e5e5e"/><path d="M17.4 8 c5 1.4 7.6 6.4 5.4 12.6 c-0.2 0.8-0.8 0.8-0.8 0 c0-3.6-1.6-6.6-5-8z" fill="#666"/></svg>
<svg class="a" style="left:720px;top:243px;" width="23" height="27" viewBox="0 0 23 27"><path d="M11.5 2 L21 9.2 L17.6 19.8 H5.4 L2 9.2z" fill="#fff" stroke="#666" stroke-width="1.3" stroke-linejoin="round"/><path d="M5.4 19.9 H17.6" stroke="#5a5a5a" stroke-width="1.8"/><path d="M5.6 21.2 h11.8 l1.6 4.4 h-15z" fill="#f5f5f5" opacity="0.9"/><path d="M5.6 21 c-0.4 2-1 3.4-1.6 4.4 M17.4 21 c0.4 2 1 3.4 1.6 4.4" stroke="#aaa" stroke-width="1" fill="none"/></svg>
<svg class="a" style="left:759px;top:244px;" width="24" height="24" viewBox="0 0 24 24"><rect x="7.4" y="7.5" width="14.4" height="14.2" rx="1" fill="#D24726"/><path d="M7.4 1.2 v4.4 M21.8 1.2 v4.4 M7.4 3.4 h14.4 M1.2 7.6 h4.4 M1.2 21.6 h4.4 M3.4 7.6 v14" stroke="#D24726" stroke-width="1.1"/><path d="M14.6 9.8 v9.8 M9.7 14.7 h9.8" stroke="#fff" stroke-width="1" stroke-dasharray="1.2 0.6"/><path d="M12.9 11.4 l1.7-1.9 1.7 1.9z M12.9 18 l1.7 1.9 1.7-1.9z M11.3 13 l-1.9 1.7 1.9 1.7z M17.9 13 l1.9 1.7 -1.9 1.7z" fill="#fff"/></svg>
<svg class="a" style="left:674px;top:277px;" width="258" height="10" viewBox="0 0 258 10"><path d="M0 8.5 H90.5 L97 0.6 L103.5 8.5 H257" fill="none" stroke="#c6c6c6" stroke-width="1"/></svg>
<span class="t" style="left:696px;top:295.80px;font-size:12px;line-height:16px;color:#444;font-weight:400;transform:scaleX(1.0378);">H<u>e</u>ight</span>
<div class="a" style="left:838px;top:293px;width:73px;height:21px;background:#fff;border:1px solid #ababab;box-sizing:border-box;"></div>
<span class="t" style="left:845.4px;top:295.90px;font-size:12px;line-height:14px;color:#444;font-weight:400;transform:scaleX(0.8785);">5.13 cm</span>
<svg class="a" style="left:899.5px;top:297px;" width="6" height="4" viewBox="0 0 6 4"><path d="M0.3 3.4 L3 0.5 L5.7 3.4z" fill="#777"/></svg>
<svg class="a" style="left:899.5px;top:306.6px;" width="6" height="4" viewBox="0 0 6 4"><path d="M0.3 0.4 L3 3.3 L5.7 0.4z" fill="#777"/></svg>
<span class="t" style="left:696px;top:322.80px;font-size:12px;line-height:16px;color:#444;font-weight:400;transform:scaleX(1.0269);">Wi<u>d</u>th</span>
<div class="a" style="left:838px;top:320px;width:73px;height:21px;background:#fff;border:1px solid #ababab;box-sizing:border-box;"></div>
<span class="t" style="left:845.4px;top:322.90px;font-size:12px;line-height:14px;color:#444;font-weight:400;transform:scaleX(0.8785);">6.87 cm</span>
<svg class="a" style="left:899.5px;top:324px;" width="6" height="4" viewBox="0 0 6 4"><path d="M0.3 3.4 L3 0.5 L5.7 3.4z" fill="#777"/></svg>
<svg class="a" style="left:899.5px;top:333.6px;" width="6" height="4" viewBox="0 0 6 4"><path d="M0.3 0.4 L3 3.3 L5.7 0.4z" fill="#777"/></svg>
<span class="t" style="left:696px;top:349.80px;font-size:12px;line-height:16px;color:#444;font-weight:400;transform:scaleX(0.9956);">Ro<u>t</u>ation</span>
<div class="a" style="left:838px;top:347px;width:73px;height:21px;background:#fff;border:1px solid #ababab;box-sizing:border-box;"></div>
<span class="t" style="left:845.4px;top:349.90px;font-size:12px;line-height:14px;color:#444;font-weight:400;transform:scaleX(0.8281);">0°</span>
<svg class="a" style="left:899.5px;top:351px;" width="6" height="4" viewBox="0 0 6 4"><path d="M0.3 3.4 L3 0.5 L5.7 3.4z" fill="#777"/></svg>
<svg class="a" style="left:899.5px;top:360.6px;" width="6" height="4" viewBox="0 0 6 4"><path d="M0.3 0.4 L3 3.3 L5.7 0.4z" fill="#777"/></svg>
<span class="t" style="left:696px;top:376.80px;font-size:12px;line-height:16px;color:#444;font-weight:400;transform:scaleX(0.9700);">Scale <u>H</u>eight</span>
<div class="a" style="left:838px;top:374px;width:73px;height:21px;background:#fff;border:1px solid #ababab;box-sizing:border-box;"></div>
<span class="t" style="left:845.4px;top:376.90px;font-size:12px;line-height:14px;color:#444;font-weight:400;transform:scaleX(0.8797);">100%</span>
<svg class="a" style="left:899.5px;top:378px;" width="6" height="4" viewBox="0 0 6 4"><path d="M0.3 3.4 L3 0.5 L5.7 3.4z" fill="#777"/></svg>
<svg class="a" style="left:899.5px;top:387.6px;" width="6" height="4" viewBox="0 0 6 4"><path d="M0.3 0.4 L3 3.3 L5.7 0.4z" fill="#777"/></svg>
<span class="t" style="left:696px;top:403.80px;font-size:12px;line-height:16px;color:#444;font-weight:400;transform:scaleX(0.9606);">Scale <u>W</u>idth</span>
<div class="a" style="left:838px;top:401px;width:73px;height:21px;background:#fff;border:1px solid #ababab;box-sizing:border-box;"></div>
<span class="t" style="left:845.4px;top:403.90px;font-size:12px;line-height:14px;color:#444;font-weight:400;transform:scaleX(0.8797);">100%</span>
<svg class="a" style="left:899.5px;top:405px;" width="6" height="4" viewBox="0 0 6 4"><path d="M0.3 3.4 L3 0.5 L5.7 3.4z" fill="#777"/></svg>
<svg class="a" style="left:899.5px;top:414.6px;" width="6" height="4" viewBox="0 0 6 4"><path d="M0.3 0.4 L3 3.3 L5.7 0.4z" fill="#777"/></svg>
<div class="a" style="left:696px;top:430px;width:13px;height:13px;background:#fff;border:1px solid #a0a0a0;box-sizing:border-box;"></div>
<span class="t" style="left:714px;top:429.00px;font-size:12px;line-height:16px;color:#444;font-weight:400;transform:scaleX(0.9811);">Lock <u>a</u>spect ratio</span>
<div class="a" style="left:696px;top:455px;width:13px;height:13px;background:#f4f4f4;border:1px solid #e9e9e9;box-sizing:border-box;"></div>
<span class="t" style="left:714px;top:454.00px;font-size:12px;line-height:16px;color:#a1a1a1;font-weight:400;transform:scaleX(0.9831);"><u>R</u>elative to original picture size</span>
<div class="a" style="left:696px;top:480px;width:13px;height:13px;background:#f4f4f4;border:1px solid #e9e9e9;box-sizing:border-box;"></div>
<span class="t" style="left:714px;top:479.00px;font-size:12px;line-height:16px;color:#a1a1a1;font-weight:400;transform:scaleX(0.9617);"><u>B</u>est scale for slide show</span>
<span class="t" style="left:706px;top:506.00px;font-size:12px;line-height:16px;color:#a1a1a1;font-weight:400;transform:scaleX(0.9823);">Res<u>o</u>lution</span>
<div class="a" style="left:822px;top:504px;width:89px;height:19px;background:#f5f5f5;"></div>
<span class="t" style="left:827px;top:506.80px;font-size:11.5px;line-height:14px;color:#b5b5b5;font-weight:400;transform:scaleX(0.9403);">640 x 480</span>
<svg class="a" style="left:896.3px;top:510.35px;" width="10" height="6.5" viewBox="0 0 10 6.5"><path d="M1 1 h8 l-4.0 4.5 z" fill="#c4c4c4"/></svg>
<svg class="a" style="left:681px;top:543.5px;" width="8" height="8" viewBox="0 0 8 8"><path d="M7 1 V7 H1z" fill="#444"/></svg>
<span class="t" style="left:696px;top:541.00px;font-size:12px;line-height:16px;color:#D24726;font-weight:700;transform:scaleX(0.9296);">Position</span>
<span class="t" style="left:696px;top:564.70px;font-size:12px;line-height:16px;color:#444;font-weight:400;transform:scaleX(1.0130);">H<u>o</u>rizontal position</span>
<div class="a" style="left:838px;top:562px;width:73px;height:21px;background:#fff;border:1px solid #ababab;box-sizing:border-box;"></div>
<span class="t" style="left:845.4px;top:564.90px;font-size:12px;line-height:14px;color:#444;font-weight:400;transform:scaleX(0.8972);">9.11 cm</span>
<svg class="a" style="left:899.5px;top:566px;" width="6" height="4" viewBox="0 0 6 4"><path d="M0.3 3.4 L3 0.5 L5.7 3.4z" fill="#777"/></svg>
<svg class="a" style="left:899.5px;top:575.6px;" width="6" height="4" viewBox="0 0 6 4"><path d="M0.3 0.4 L3 3.3 L5.7 0.4z" fill="#777"/></svg>
<span class="t" style="left:759.3px;top:591.80px;font-size:12px;line-height:16px;color:#444;font-weight:400;transform:scaleX(0.9680);"><u>F</u>rom</span>
<div class="a" style="left:798px;top:589px;width:113px;height:21px;background:#fff;border:1px solid #ababab;box-sizing:border-box;"></div>
<span class="t" style="left:804.4px;top:592.80px;font-size:12px;line-height:14px;color:#444;font-weight:400;transform:scaleX(0.9854);">Top Left Corner</span>
<svg class="a" style="left:896.5px;top:596.15px;" width="10" height="6.5" viewBox="0 0 10 6.5"><path d="M1 1 h8 l-4.0 4.5 z" fill="#777"/></svg>
<span class="t" style="left:696px;top:618.90px;font-size:12px;line-height:16px;color:#444;font-weight:400;transform:scaleX(0.9994);"><u>V</u>ertical position</span>
<div class="a" style="left:838px;top:616px;width:73px;height:21px;background:#fff;border:1px solid #ababab;box-sizing:border-box;"></div>
<span class="t" style="left:845.4px;top:618.90px;font-size:12px;line-height:14px;color:#444;font-weight:400;transform:scaleX(0.8785);">6.08 cm</span>
<svg class="a" style="left:899.5px;top:620px;" width="6" height="4" viewBox="0 0 6 4"><path d="M0.3 3.4 L3 0.5 L5.7 3.4z" fill="#777"/></svg>
<svg class="a" style="left:899.5px;top:629.6px;" width="6" height="4" viewBox="0 0 6 4"><path d="M0.3 0.4 L3 3.3 L5.7 0.4z" fill="#777"/></svg>
<span class="t" style="left:759.3px;top:646.00px;font-size:12px;line-height:16px;color:#444;font-weight:400;transform:scaleX(0.9680);">F<u>r</u>om</span>
<div class="a" style="left:798px;top:643px;width:113px;height:21px;background:#fff;border:1px solid #ababab;box-sizing:border-box;"></div>
<span class="t" style="left:804.4px;top:646.80px;font-size:12px;line-height:14px;color:#444;font-weight:400;transform:scaleX(0.9854);">Top Left Corner</span>
<svg class="a" style="left:896.5px;top:650.15px;" width="10" height="6.5" viewBox="0 0 10 6.5"><path d="M1 1 h8 l-4.0 4.5 z" fill="#777"/></svg>
<svg class="a" style="left:682px;top:683px;" width="8" height="10" viewBox="0 0 8 10"><path d="M1.5 1 L6.2 5 L1.5 9z" fill="#fff" stroke="#666" stroke-width="1"/></svg>
<span class="t" style="left:696px;top:680.50px;font-size:12px;line-height:16px;color:#333;font-weight:700;transform:scaleX(1.0043);">Text Box</span>
<div class="a" style="left:915px;top:292px;width:15px;height:404px;background:#dadada;"></div>
<div class="a" style="left:915px;top:292px;width:15px;height:15px;background:#fff;border:1px solid #ababab;box-sizing:border-box;"></div>
<svg class="a" style="left:918.5px;top:296.6px;" width="8" height="6" viewBox="0 0 8 6"><path d="M0.5 4.6 L4 0.8 L7.5 4.6z" fill="#777"/></svg>
<div class="a" style="left:915px;top:326px;width:15px;height:355px;background:#fff;border:1px solid #ababab;box-sizing:border-box;"></div>
<div class="a" style="left:915px;top:682px;width:15px;height:14px;background:#fff;border:1px solid #ababab;box-sizing:border-box;"></div>
<svg class="a" style="left:918.5px;top:686.4px;" width="8" height="6" viewBox="0 0 8 6"><path d="M0.5 1 L4 4.8 L7.5 1z" fill="#777"/></svg>
<span class="t" style="left:8px;top:720.00px;font-size:11.5px;line-height:14px;color:#444;font-weight:400;transform:scaleX(0.9906);">Slide 1 of 2</span>
<svg class="a" style="left:83px;top:720px;" width="16" height="14" viewBox="0 0 16 14"><path d="M1.6 2 h4.2 c0.8 0 1.4 0.5 1.4 1.3 V12 c0-0.7-0.6-1.1-1.4-1.1 H1.6z M7.2 3.3 c0-0.8 0.6-1.3 1.4-1.3 h3.6 v3" fill="none" stroke="#444" stroke-width="1"/><path d="M8.6 8.8 l1.8 2 3.6-4.6" fill="none" stroke="#444" stroke-width="1.1"/></svg>
<span class="t" style="left:115px;top:720.00px;font-size:11.5px;line-height:14px;color:#444;font-weight:400;transform:scaleX(0.9982);">English (Philippines)</span>
<svg class="a" style="left:525px;top:720px;" width="13" height="13" viewBox="0 0 13 13"><path d="M1 11.6 h11 M1 8.8 h11 M2.6 6 h7.8" stroke="#444" stroke-width="1.1"/><path d="M4 4 L6.5 1.2 L9 4z" fill="#444"/></svg>
<span class="t" style="left:542px;top:720.00px;font-size:11.5px;line-height:14px;color:#444;font-weight:400;transform:scaleX(0.9986);">Notes</span>
<div class="a" style="left:591px;top:716.5px;width:38px;height:19.5px;background:#c8c6c4;"></div>
<svg class="a" style="left:602px;top:719.3px;" width="17" height="14" viewBox="0 0 17 14"><rect x="1.5" y="1.5" width="13" height="11" fill="none" stroke="#444" stroke-width="1.1"/><path d="M4.6 1.5 v11 M4.6 8.6 h10" stroke="#444" stroke-width="1"/><rect x="6.6" y="3.4" width="6" height="3.4" fill="none" stroke="#444" stroke-width="0.9"/></svg>
<svg class="a" style="left:640px;top:719.3px;" width="16" height="14" viewBox="0 0 16 14"><rect x="1.5" y="1.5" width="5" height="4" fill="none" stroke="#444" stroke-width="1"/><rect x="1.5" y="8.5" width="5" height="4" fill="none" stroke="#444" stroke-width="1"/><rect x="9" y="1.5" width="5" height="4" fill="none" stroke="#444" stroke-width="1"/><rect x="9" y="8.5" width="5" height="4" fill="none" stroke="#444" stroke-width="1"/></svg>
<svg class="a" style="left:678px;top:719.3px;" width="15" height="14" viewBox="0 0 15 14"><path d="M1.5 1.8 h4.8 l1.2 0.9 l1.2-0.9 h4.8 v9.8 h-4.8 l-1.2 0.9 l-1.2-0.9 h-4.8z M7.5 2.7 v9.8" fill="none" stroke="#444" stroke-width="1"/><path d="M3 4.2 h3 M3 6 h3 M3 7.8 h3 M3 9.6 h3 M9 4.2 h3 M9 6 h3 M9 7.8 h3 M9 9.6 h3" stroke="#444" stroke-width="0.9"/></svg>
<svg class="a" style="left:716px;top:719.3px;" width="15" height="14" viewBox="0 0 15 14"><path d="M1 1.6 h13 M2.4 1.6 v6.6 h10.2 v-6.6 M7.5 8.2 v3.8 M4.6 12.4 h5.8" fill="none" stroke="#444" stroke-width="1.1"/></svg>
<div class="a" style="left:748px;top:726.2px;width:6px;height:1.6px;background:#444;"></div>
<div class="a" style="left:758px;top:726.6px;width:100px;height:1px;background:#9a9a9a;"></div>
<div class="a" style="left:808px;top:724px;width:1px;height:6px;background:#9a9a9a;"></div>
<div class="a" style="left:772px;top:721px;width:5px;height:11px;background:#666;"></div>
<div class="a" style="left:861.5px;top:726.3px;width:7px;height:1.4px;background:#444;"></div>
<div class="a" style="left:864.3px;top:723.5px;width:1.4px;height:7px;background:#444;"></div>
<span class="t" style="left:879.5px;top:720.00px;font-size:11.5px;line-height:14px;color:#444;font-weight:400;transform:scaleX(0.9341);">36%</span>
<svg class="a" style="left:914px;top:719.5px;" width="15" height="15" viewBox="0 0 15 15"><rect x="1.5" y="1.5" width="12" height="12" rx="1" fill="none" stroke="#555" stroke-width="1"/><path d="M7.5 3.2 v2.4 M7.5 9.4 v2.4 M3.2 7.5 h2.4 M9.4 7.5 h2.4" stroke="#444" stroke-width="0.9"/><path d="M6.3 4.4 l1.2-1.5 1.2 1.5z M6.3 10.6 l1.2 1.5 1.2-1.5z M4.4 6.3 l-1.5 1.2 1.5 1.2z M10.6 6.3 l1.5 1.2 -1.5 1.2z" fill="#444"/></svg>
</body></html>
